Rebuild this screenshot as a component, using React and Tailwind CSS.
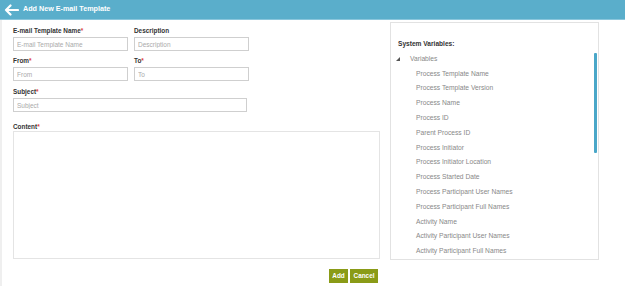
import React from 'react';

const variables = [
    'Process Template Name',
    'Process Template Version',
    'Process Name',
    'Process ID',
    'Parent Process ID',
    'Process Initiator',
    'Process Initiator Location',
    'Process Started Date',
    'Process Participant User Names',
    'Process Participant Full Names',
    'Activity Name',
    'Activity Participant User Names',
    'Activity Participant Full Names',
];

function Label({ text, required }) {
    return (
        <div className="h-[8px] leading-[8px] text-[6.4px] font-bold text-[#333] mb-[2px]">
            {text}
            {required && <span className="text-[#e0403f]">*</span>}
        </div>
    );
}

function Field({ label, placeholder, required, width }) {
    return (
        <div className={width}>
            <Label text={label} required={required} />
            <input
                className="block w-full h-[14px] border border-[#cfcfcf] px-[3px] text-[6.5px] text-[#333] placeholder:text-[#aaa] focus:outline-none bg-white"
                placeholder={placeholder}
                type="text"
            />
        </div>
    );
}

function App() {
    return (
        <div className="w-[625px] h-[286px] bg-white overflow-hidden font-['Liberation_Sans',Arial,sans-serif]">
            <div className="h-[20px] bg-[#5aaecb] border-b border-[#8ac6dc] flex items-center">
                <svg width="15" height="14" viewBox="0 0 15 14" className="ml-[4px]">
                    <path d="M6.5 2.5 L2 7 L6.5 11.5 M2 7 H14" stroke="white" strokeWidth="2.2" fill="none" strokeLinecap="round" strokeLinejoin="round" />
                </svg>
                <span className="ml-[4px] text-white font-bold text-[7.2px]">Add New E-mail Template</span>
            </div>

            <div className="border-l-2 border-[#efefef] h-[266px] pl-[11px]">
                <div className="flex items-start">
                    <div className="w-[367px] pt-[7px]">
                        <div className="flex gap-[6px] mb-[6px]">
                            <Field label="E-mail Template Name" placeholder="E-mail Template Name" required width="w-[115px]" />
                            <Field label="Description" placeholder="Description" width="w-[115px]" />
                        </div>
                        <div className="flex gap-[6px] mb-[7px]">
                            <Field label="From" placeholder="From" required width="w-[115px]" />
                            <Field label="To" placeholder="To" required width="w-[115px]" />
                        </div>
                        <Field label="Subject" placeholder="Subject" required width="w-[234px]" />
                        <div className="mt-[11px]">
                            <div className="h-[8px] leading-[8px] text-[6.4px] font-bold text-[#333]">
                                Content<span className="text-[#e0403f]">*</span>
                            </div>
                            <textarea className="block w-full h-[128px] border border-[#e4e4e4] resize-none focus:outline-none" />
                        </div>
                    </div>

                    <div className="relative ml-[10px] mt-[2px] w-[209px] h-[238px] border border-[#e2e2e2] overflow-hidden pl-[7px] pt-[14px]">
                        <div className="h-[14.8px] leading-[14.8px] text-[6.6px] font-bold text-[#333]">System Variables:</div>
                        <div className="h-[14.8px] flex items-center text-[6.7px] text-[#888]">
                            <svg width="4" height="4" viewBox="0 0 4 4" className="ml-[-2px] mr-[10px]">
                                <polygon points="4,0 4,4 0,4" fill="#555" />
                            </svg>
                            Variables
                        </div>
                        {variables.map((v) => (
                            <div key={v} className="h-[14.8px] leading-[14.8px] pl-[18px] text-[6.7px] text-[#888] whitespace-nowrap">
                                {v}
                            </div>
                        ))}
                        <div className="absolute right-[1px] top-[30px] w-[3px] h-[100px] bg-[#4aa7c8] rounded-[1px]" />
                    </div>
                </div>

                <div className="w-[367px] flex justify-end gap-[2px] mt-[9px] pr-[2px]">
                    <button className="h-[14px] w-[19px] bg-[#8a9b17] text-white font-bold text-[6.4px]">Add</button>
                    <button className="h-[14px] w-[28px] bg-[#8a9b17] text-white font-bold text-[6.4px]">Cancel</button>
                </div>
            </div>
        </div>
    );
}

export default App;
